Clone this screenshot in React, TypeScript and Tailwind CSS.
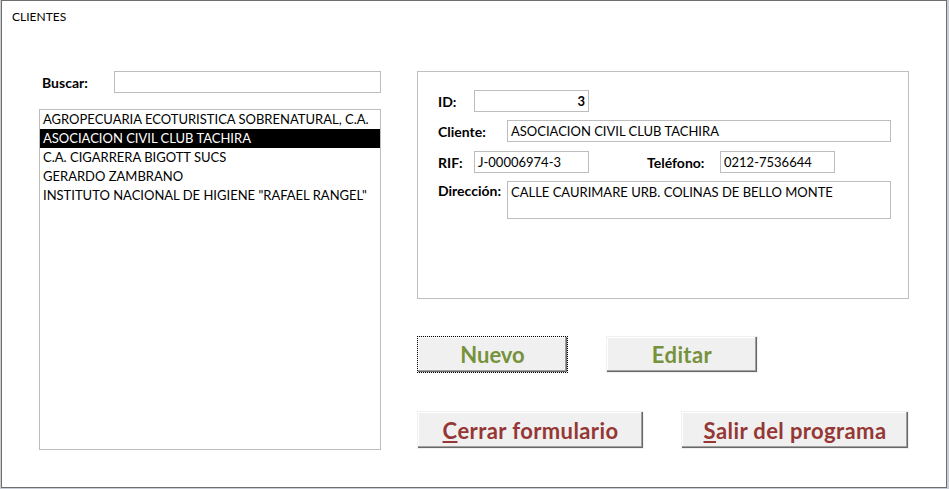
const clientes = [
  'AGROPECUARIA ECOTURISTICA SOBRENATURAL, C.A.',
  'ASOCIACION CIVIL CLUB TACHIRA',
  'C.A. CIGARRERA BIGOTT SUCS',
  'GERARDO ZAMBRANO',
  'INSTITUTO NACIONAL DE HIGIENE "RAFAEL RANGEL"',
];

const font = { fontFamily: 'Lato, "Noto Sans", sans-serif' };

function Field({ value, className, right }: { value: string; className: string; right?: boolean }) {
  return (
    <div
      className={`border border-[#bdbdbd] bg-white px-[3px] text-[13px] leading-[20px] text-black whitespace-nowrap ${right ? 'text-right' : ''} ${className}`}
    >
      {value}
    </div>
  );
}

function Btn({ children, className, color, focus }: { children: React.ReactNode; className: string; color: string; focus?: boolean }) {
  return (
    <button
      className={`flex items-center justify-center bg-[#f0f0f0] text-[22px] font-bold whitespace-nowrap ${color} ${
        focus ? 'border border-dotted border-black' : 'border border-[#f0f0f0]'
      } shadow-[inset_-1px_-1px_0_#696969,inset_-2px_-2px_0_#a0a0a0,inset_1px_1px_0_#ffffff] ${className}`}
    >
      {children}
    </button>
  );
}

export default function App() {
  return (
    <div className="w-[949px] h-[489px] bg-[#c9ced6] overflow-hidden" style={font}>
      <div className="ml-[1px] w-[946px] h-[488px] bg-white border border-[#6e6e6e]">
        <p className="pl-[10px] pt-[8px] text-[12px] leading-[16px] text-black">CLIENTES</p>

        <div className="flex mt-[46px]">
          {/* lista de clientes */}
          <div className="ml-[37px] w-[342px]">
            <div className="flex items-center h-[22px]">
              <span className="ml-[3px] w-[72px] text-[14px] font-bold text-black">Buscar:</span>
              <div className="w-[267px] h-[22px] border border-[#bdbdbd]" />
            </div>
            <div className="mt-[16px] h-[341px] border border-[#bdbdbd]">
              {clientes.map((c, i) => (
                <div
                  key={c}
                  className={`h-[19px] px-[3px] text-[13px] leading-[19px] whitespace-nowrap ${
                    i === 1 ? 'bg-black text-white' : 'text-black'
                  }`}
                >
                  {c}
                </div>
              ))}
            </div>
          </div>

          {/* datos */}
          <div className="ml-[36px] w-[492px]">
            <div className="h-[228px] border border-[#c0c0c0] pl-[20px] pt-[18px]">
              <div className="flex items-center">
                <span className="w-[36px] text-[14px] font-bold">ID:</span>
                <Field value="3" right className="w-[115px] h-[22px] font-bold" />
              </div>
              <div className="flex items-center mt-[8px]">
                <span className="w-[69px] text-[14px] font-bold">Cliente:</span>
                <Field value="ASOCIACION CIVIL CLUB TACHIRA" className="w-[384px] h-[22px]" />
              </div>
              <div className="flex items-center mt-[9px]">
                <span className="w-[36px] text-[14px] font-bold">RIF:</span>
                <Field value="J-00006974-3" className="w-[115px] h-[22px]" />
                <span className="ml-[58px] w-[73px] text-[14px] font-bold whitespace-nowrap">Teléfono:</span>
                <Field value="0212-7536644" className="w-[115px] h-[22px]" />
              </div>
              <div className="flex items-start mt-[8px]">
                <span className="w-[69px] text-[14px] font-bold leading-[20px]">Dirección:</span>
                <Field value="CALLE CAURIMARE URB. COLINAS DE BELLO MONTE" className="w-[384px] h-[38px]" />
              </div>
            </div>

            <div className="flex mt-[37px] gap-[38px]">
              <Btn focus color="text-[#76923c]" className="w-[151px] h-[37px]">
                Nuevo
              </Btn>
              <Btn color="text-[#76923c] tracking-[0.4px]" className="w-[152px] h-[37px]">
                Editar
              </Btn>
            </div>
            <div className="flex mt-[38px] gap-[37px]">
              <Btn color="text-[#953735] tracking-[0.4px]" className="w-[227px] h-[38px]">
                <span className="underline underline-offset-2">C</span>errar formulario
              </Btn>
              <Btn color="text-[#953735] tracking-[0.4px]" className="w-[228px] h-[38px]">
                <span className="underline underline-offset-2">S</span>alir del programa
              </Btn>
            </div>
          </div>
        </div>
      </div>
    </div>
  );
}
